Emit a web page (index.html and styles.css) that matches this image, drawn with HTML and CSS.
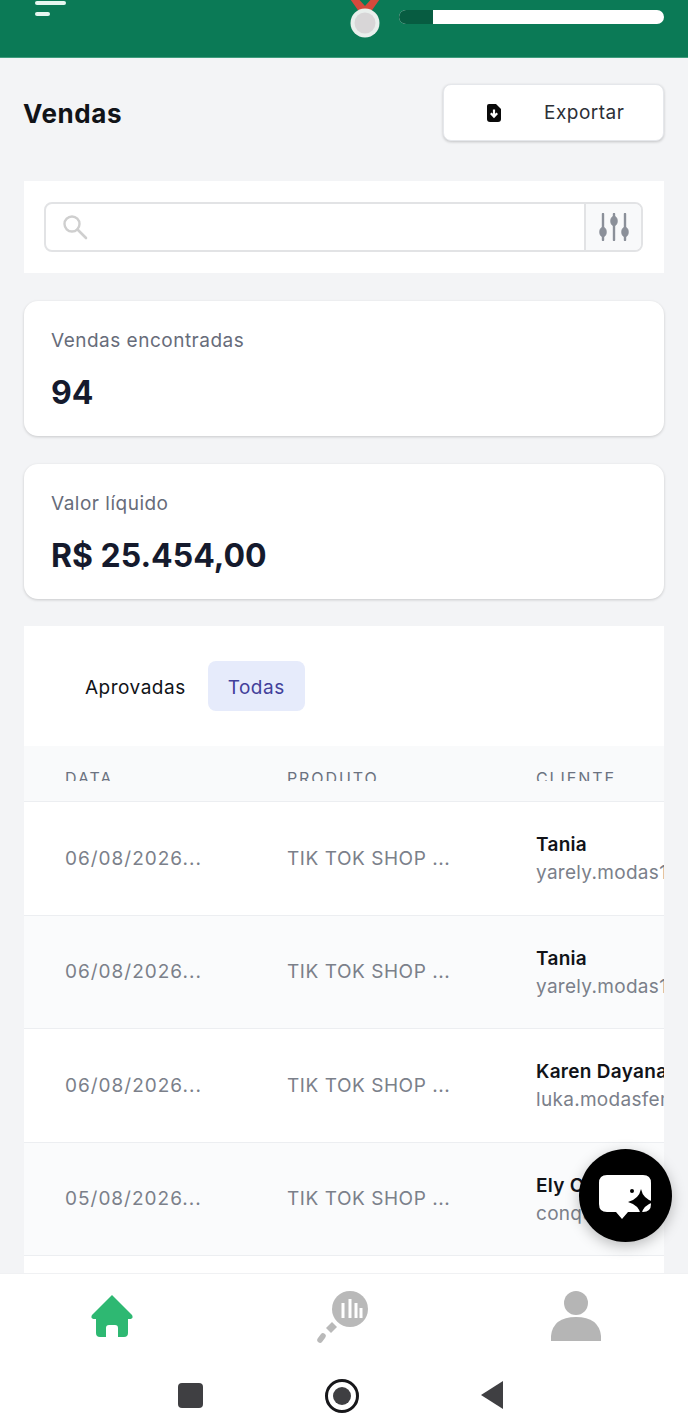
FILE: index.html
```html
<!DOCTYPE html>
<html lang="pt-BR">
<head>
    <meta charset="UTF-8">
    <meta name="viewport" content="width=device-width, initial-scale=1.0">
    <title>Vendas</title>
    <link rel="stylesheet" href="styles.css">
</head>
<body>
    <div class="app">
        <header class="topbar">
            <div class="menu-icon">
                <span class="menu-long"></span>
                <span class="menu-short"></span>
            </div>
            <svg class="medal" width="36" height="40" viewBox="0 0 36 40">
                <path d="M1 -4 L13 13 L23 13 L35 -4 L27 -4 L18 6 L9 -4 Z" fill="#d6493c"/>
                <circle cx="18" cy="23" r="14.5" fill="#e9efec"/>
                <circle cx="18" cy="23" r="10.5" fill="#d8d6d7"/>
            </svg>
            <div class="progress"><div class="progress-done"></div></div>
        </header>

        <main class="content">
            <div class="title-row">
                <h1>Vendas</h1>
                <button class="export">
                    <svg width="14" height="18" viewBox="0 0 14 18">
                        <path d="M2 0 H9 L14 5 V15 Q14 18 11 18 H3 Q0 18 0 15 V2 Q0 0 2 0 Z" fill="#0a0a0a"/>
                        <path d="M7 5.5 V12 M3.8 9.2 L7 12.6 L10.2 9.2" fill="none" stroke="#fff" stroke-width="2.2"/>
                    </svg>
                    <span>Exportar</span>
                </button>
            </div>

            <section class="search-card">
                <div class="search-box">
                    <div class="search-input">
                        <svg width="26" height="26" viewBox="0 0 26 26" fill="none" stroke="#cfcfcf">
                            <circle cx="10" cy="10" r="7.5" stroke-width="2.4"/>
                            <path d="M15.5 15.5 L24 24" stroke-width="2.6" stroke-linecap="round"/>
                        </svg>
                    </div>
                    <div class="search-filter">
                        <svg width="30" height="28" viewBox="0 0 30 28" fill="#8b9099" stroke="#8b9099">
                            <path d="M4 1 V27 M15 1 V27 M26 1 V27" stroke-width="2.4" stroke-linecap="round"/>
                            <ellipse cx="4" cy="19" rx="3.2" ry="4.5"/>
                            <ellipse cx="15" cy="8" rx="3.2" ry="4.5"/>
                            <ellipse cx="26" cy="19" rx="3.2" ry="4.5"/>
                        </svg>
                    </div>
                </div>
            </section>

            <section class="stat-card">
                <div class="stat-label">Vendas encontradas</div>
                <div class="stat-value">94</div>
            </section>

            <section class="stat-card">
                <div class="stat-label">Valor líquido</div>
                <div class="stat-value">R$ 25.454,00</div>
            </section>

            <section class="sales">
                <div class="tabs">
                    <div class="tab">Aprovadas</div>
                    <div class="tab tab-active">Todas</div>
                </div>
                <div class="table-head">
                    <div class="head-label">DATA</div>
                    <div class="head-label">PRODUTO</div>
                    <div class="head-label">CLIENTE</div>
                </div>
                <div class="table-row">
                    <div class="cell date">06/08/2026...</div>
                    <div class="cell">TIK TOK SHOP ...</div>
                    <div class="client"><b>Tania</b><span>yarely.modas1@gmail.com</span></div>
                </div>
                <div class="table-row alt">
                    <div class="cell date">06/08/2026...</div>
                    <div class="cell">TIK TOK SHOP ...</div>
                    <div class="client"><b>Tania</b><span>yarely.modas1@gmail.com</span></div>
                </div>
                <div class="table-row">
                    <div class="cell date">06/08/2026...</div>
                    <div class="cell">TIK TOK SHOP ...</div>
                    <div class="client"><b>Karen Dayana</b><span>luka.modasfem@gmail.com</span></div>
                </div>
                <div class="table-row alt">
                    <div class="cell date">05/08/2026...</div>
                    <div class="cell">TIK TOK SHOP ...</div>
                    <div class="client"><b>Ely Castro</b><span>conquista@gmail.com</span></div>
                </div>
                <div class="table-row"></div>
            </section>
        </main>

        <button class="chat-button">
            <svg width="62" height="52" viewBox="0 0 62 52">
                <path d="M12 5 H48 Q56 5 56 13 V34 Q56 42 48 42 H33 L27 49 L21 42 H12 Q4 42 4 34 V13 Q4 5 12 5 Z" fill="#fff"/>
                <circle cx="37" cy="21" r="2" fill="#000"/>
                <path d="M46 19 Q48 29 59 32 Q48 35 46 45 Q44 35 33 32 Q44 29 46 19 Z" fill="#000"/>
            </svg>
        </button>

        <nav class="bottom-nav">
            <svg width="42" height="42" viewBox="0 0 42 42">
                <path d="M21 0 L41 20 Q43 24 38 24 H37 V38 Q37 42 33 42 H27 V33 Q27 30 24 30 H18 Q15 30 15 33 V42 H9 Q5 42 5 38 V24 H4 Q-1 24 1 20 Z" fill="#2eb872"/>
            </svg>
            <svg width="54" height="54" viewBox="0 0 54 54">
                <circle cx="33" cy="20" r="18" fill="#b9b9b9"/>
                <path d="M26 14 V29 M33 10 V29 M39 14 V29 M44 19 V29" stroke="#fff" stroke-width="3" fill="none"/>
                <path d="M9 39 L15 33 L20 38 L14 44 Z" fill="#b9b9b9"/>
                <path d="M3 51 L6 47" stroke="#b9b9b9" stroke-width="5.5" stroke-linecap="round"/>
            </svg>
            <svg width="50" height="52" viewBox="0 0 50 52">
                <circle cx="25" cy="13" r="12" fill="#b5b5b5"/>
                <path d="M0 51 V46 Q2 27 25 27 Q48 27 50 46 V51 Z" fill="#b5b5b5"/>
            </svg>
        </nav>

        <div class="system-bar">
            <span class="sys-square"></span>
            <span class="sys-circle"><span></span></span>
            <span class="sys-back"></span>
        </div>
    </div>
</body>
</html>
```

FILE: styles.css
```css
* {
    box-sizing: border-box;
}
body {
    margin: 0;
    font-family: "Inter", "Liberation Sans", sans-serif;
    background: #f3f4f6;
}
.app {
    position: relative;
    width: 688px;
    height: 1420px;
    overflow: hidden;
    display: flex;
    flex-direction: column;
}
.topbar {
    height: 58px;
    flex-shrink: 0;
    background: #0b7a56;
    border-bottom: 1px solid #3f9c7d;
    display: flex;
    align-items: flex-start;
    padding-left: 35px;
}
.menu-icon {
    width: 31px;
    padding-top: 1px;
    margin-right: 281px;
}
.menu-icon span {
    display: block;
    height: 4px;
    border-radius: 2px;
    background: #e6f7f0;
}
.menu-long {
    width: 31px;
    margin-bottom: 7px;
}
.menu-short {
    width: 15px;
}
.medal {
    flex-shrink: 0;
}
.progress {
    width: 265px;
    height: 14px;
    margin: 10px 0 0 16px;
    border-radius: 7px;
    background: #fff;
    overflow: hidden;
}
.progress-done {
    width: 34px;
    height: 14px;
    background: #075c41;
}
.content {
    flex: 1;
    min-height: 0;
    overflow: hidden;
    padding: 26px 24px 0;
}
.title-row {
    display: flex;
    justify-content: space-between;
    align-items: center;
    margin-bottom: 40px;
}
h1 {
    margin: 0 0 0 -1px;
    padding-top: 2px;
    font-size: 26px;
    font-weight: 700;
    letter-spacing: 0.6px;
    color: #111318;
}
.export {
    width: 221px;
    height: 57px;
    display: flex;
    align-items: center;
    padding: 0 0 0 43px;
    background: #fff;
    border: 1px solid #e5e7eb;
    border-radius: 8px;
    box-shadow: 0 1px 3px rgba(0, 0, 0, 0.2);
    font-family: inherit;
    font-size: 19px;
    letter-spacing: 0.5px;
    color: #2b2f36;
}
.export span {
    margin-left: 43px;
}
.search-card {
    height: 92px;
    padding: 21px 21px 0 20px;
    background: #fff;
    margin-bottom: 28px;
}
.search-box {
    height: 50px;
    display: flex;
    border: 2px solid #e2e3e5;
    border-radius: 8px;
    overflow: hidden;
}
.search-input {
    flex: 1;
    display: flex;
    align-items: center;
    padding-left: 16px;
}
.search-filter {
    width: 57px;
    display: flex;
    align-items: center;
    justify-content: center;
    background: #f8f9fa;
    border-left: 2px solid #e2e3e5;
}
.stat-card {
    height: 135px;
    padding: 28px 27px 0;
    background: #fff;
    border-radius: 14px;
    box-shadow: 0 1px 3px rgba(0, 0, 0, 0.18);
    margin-bottom: 28px;
}
.stat-label {
    font-size: 19px;
    line-height: 24px;
    letter-spacing: 0.5px;
    color: #676c7a;
}
.stat-value {
    margin-top: 20px;
    font-size: 32px;
    line-height: 40px;
    font-weight: 700;
    color: #151a2d;
}
.sales {
    margin-top: -1px;
    background: #fff;
    overflow: hidden;
}
.tabs {
    height: 120px;
    display: flex;
    align-items: flex-start;
    padding: 35px 0 0 41px;
    gap: 2px;
}
.tab {
    height: 50px;
    padding: 2px 20px 0;
    display: flex;
    align-items: center;
    border-radius: 8px;
    font-size: 19px;
    letter-spacing: 0.5px;
    color: #111318;
}
.tab-active {
    background: #e6ebfb;
    color: #42409a;
}
.table-head,
.table-row {
    display: grid;
    grid-template-columns: 222px 249px 1fr;
    padding-left: 41px;
}
.table-head {
    height: 56px;
    padding-top: 23px;
    background: #f9fafb;
    border-bottom: 1px solid #eceef1;
}
.head-label {
    height: 12px;
    overflow: hidden;
    font-size: 16px;
    line-height: 18px;
    letter-spacing: 1.9px;
    color: #6b7280;
}
.table-row {
    height: 113.5px;
    align-items: center;
    border-bottom: 1px solid #eceef1;
    white-space: nowrap;
}
.alt {
    background: #fafbfc;
}
.cell {
    font-size: 19px;
    letter-spacing: 0.55px;
    color: #7b808a;
}
.date {
    letter-spacing: 1px;
}
.client {
    overflow: hidden;
    padding-top: 2px;
}
.client b,
.client span {
    display: block;
}
.client b {
    font-size: 19px;
    line-height: 28px;
    font-weight: 600;
    letter-spacing: 0.3px;
    color: #111318;
}
.client span {
    font-size: 19px;
    line-height: 28px;
    letter-spacing: 0.3px;
    color: #7b808a;
}
.chat-button {
    position: absolute;
    left: 579px;
    top: 1149px;
    width: 93px;
    height: 93px;
    padding: 0;
    display: flex;
    align-items: center;
    justify-content: center;
    border: none;
    border-radius: 50%;
    background: #000;
    box-shadow: 0 4px 14px rgba(0, 0, 0, 0.25);
}
.bottom-nav {
    height: 84px;
    flex-shrink: 0;
    display: grid;
    grid-template-columns: repeat(3, 232px);
    justify-content: center;
    justify-items: center;
    align-items: center;
    background: #fff;
    border-top: 1px solid #f0f1f3;
}
.system-bar {
    height: 63px;
    flex-shrink: 0;
    display: flex;
    justify-content: center;
    align-items: flex-start;
    gap: 122px;
    background: #fff;
    padding: 0 7px 0 0;
}
.system-bar > span {
    display: block;
    flex-shrink: 0;
}
.sys-square {
    width: 25px;
    height: 25px;
    margin-top: 26px;
    border-radius: 4px;
    background: #3f3f42;
}
.sys-circle {
    width: 34px;
    height: 34px;
    margin-top: 22px;
    border: 3px solid #17171a;
    border-radius: 50%;
    display: flex !important;
    align-items: center;
    justify-content: center;
}
.sys-circle span {
    width: 18px;
    height: 18px;
    border-radius: 50%;
    background: #3f3f42;
}
.sys-back {
    width: 0;
    height: 0;
    margin-top: 24px;
    border-top: 14px solid transparent;
    border-bottom: 14px solid transparent;
    border-right: 22px solid #3f3f42;
}
```
